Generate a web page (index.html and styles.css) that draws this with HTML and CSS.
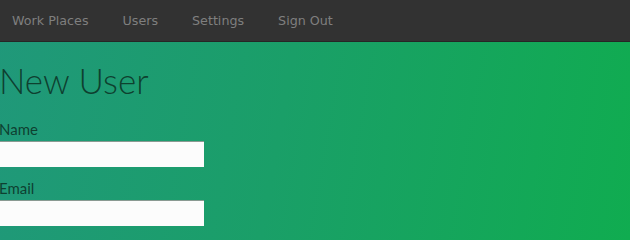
FILE: index.html
```html
<!DOCTYPE html>
<html>
<head>
<meta charset="utf-8">
<link rel="stylesheet" href="styles.css">
</head>
<body>
<nav class="navbar">
  <a class="nav-link" href="#">Work Places</a>
  <a class="nav-link" href="#">Users</a>
  <a class="nav-link" href="#">Settings</a>
  <a class="nav-link" href="#">Sign Out</a>
</nav>
<main class="content">
  <h1 class="title">New User</h1>
  <form class="form">
    <label class="field">
      <span class="label">Name</span>
      <input class="input" type="text">
    </label>
    <label class="field">
      <span class="label">Email</span>
      <input class="input" type="text">
    </label>
  </form>
</main>
</body>
</html>
```
FILE: styles.css
```css
html, body {
  margin: 0;
  padding: 0;
  height: 100%;
}
body {
  background: linear-gradient(100deg, #20987a 0%, #1a9f68 45%, #10ac50 100%);
  font-family: "Lato", "Open Sans", sans-serif;
  overflow: hidden;
}
.navbar {
  height: 41px;
  background: #323232;
  border-bottom: 1px solid #262626;
  display: flex;
  align-items: center;
  padding-left: 12px;
  gap: 34px;
}
.nav-link {
  font-family: "DejaVu Sans", sans-serif;
  font-size: 12.7px;
  color: #7f7f7f;
  text-decoration: none;
}
.content {
  margin-left: -1px;
}
.title {
  margin: 0;
  padding-top: 16px;
  font-size: 35px;
  font-weight: 300;
  line-height: 44px;
  color: rgba(10, 40, 28, 0.8);
}
.form {
  display: flex;
  flex-direction: column;
  gap: 12px;
  margin-top: 18px;
}
.field {
  display: flex;
  flex-direction: column;
  gap: 3px;
}
.label {
  font-size: 15px;
  line-height: 18px;
  color: rgba(10, 40, 28, 0.8);
}
.input {
  width: 205px;
  height: 26px;
  box-sizing: border-box;
  margin: 0;
  border: none;
  border-top: 1px solid #8a9a92;
  background: #fcfcfc;
  outline: none;
}
```
